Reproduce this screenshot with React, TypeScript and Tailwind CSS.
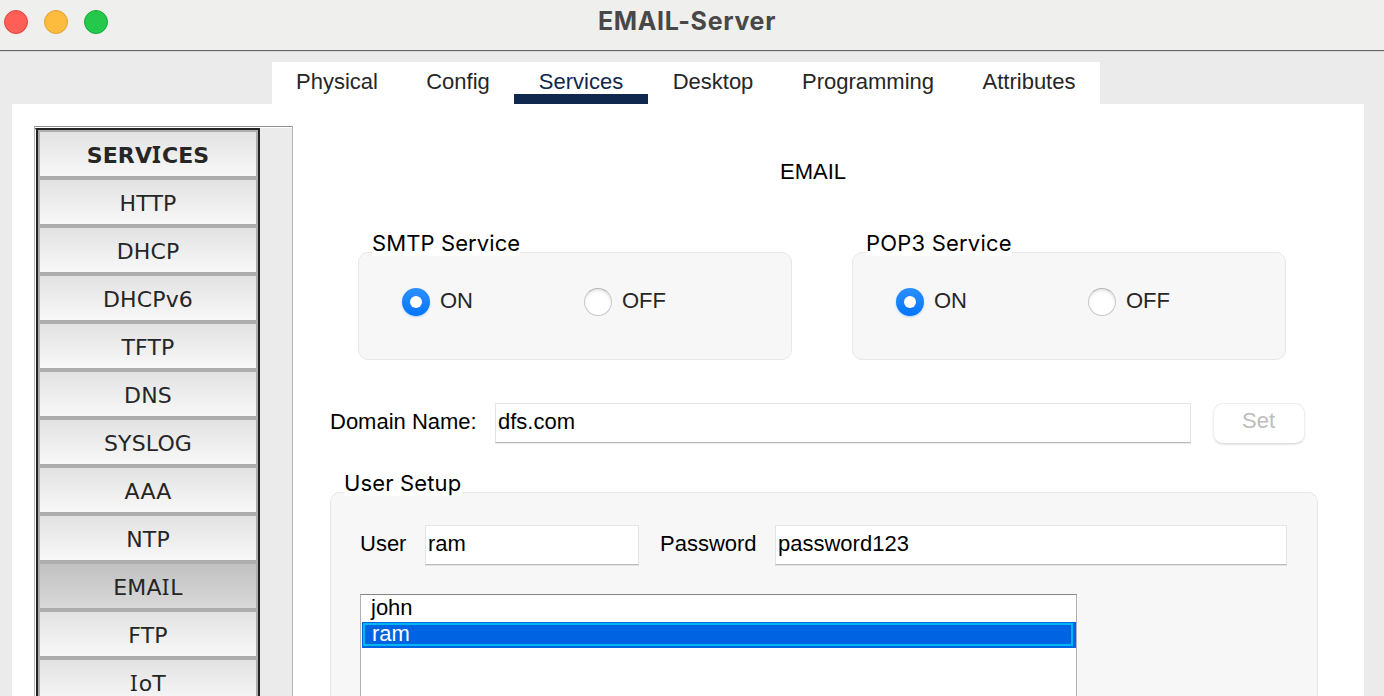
import { Fragment } from "react";
import { clsx } from "clsx";

const tabs = [
  { name: "Physical", width: "w-[130px]" },
  { name: "Config", width: "w-[112px]" },
  { name: "Services", width: "w-[134px]" },
  { name: "Desktop", width: "w-[130px]" },
  { name: "Programming", width: "w-[180px]" },
  { name: "Attributes", width: "w-[142px]" },
];

const services = ["SERVICES", "HTTP", "DHCP", "DHCPv6", "TFTP", "DNS", "SYSLOG", "AAA", "NTP", "EMAIL", "FTP", "IoT"];

function Caption({ text }: { text: string }) {
  const parts = text.split("I");
  return (
    <span>
      {parts.map((p, i) => (
        <Fragment key={i}>
          {i > 0 && <span className="font-['Noto_Sans',sans-serif] text-[22.5px] leading-none tracking-[1px]">I</span>}
          {p}
        </Fragment>
      ))}
    </span>
  );
}

function Radio({ checked, label }: { checked?: boolean; label: string }) {
  return (
    <label className="flex h-7 items-center gap-[10px] text-[#262626]">
      <span
        className={clsx(
          "flex size-7 shrink-0 items-center justify-center rounded-full",
          checked
            ? "bg-linear-to-b from-[#2a8fff] to-[#0075ff] shadow-[0_1px_2px_rgba(0,110,255,0.3)]"
            : "border border-[#c9c9c9] border-t-[#b4b4b4] bg-white shadow-[inset_0_2px_3px_rgba(0,0,0,0.1)]",
        )}
      >
        {checked && <span className="size-3 rounded-full bg-white" />}
      </span>
      <span className="-mt-[3px] leading-6">{label}</span>
    </label>
  );
}

function Legend({ text, className }: { text: string; className: string }) {
  return (
    <div
      className={clsx(
        "absolute -top-[22px] h-[25px] whitespace-nowrap bg-white font-[Inter,sans-serif] text-[22px] leading-[25px]",
        className,
      )}
    >
      {text}
    </div>
  );
}

function Field({ value, className }: { value: string; className: string }) {
  return (
    <div
      className={clsx(
        "h-10 shrink-0 border border-[#e4e4e4] border-b-[#b9b9b9] bg-white pl-[2px] leading-[35px] shadow-[0_1px_0_rgba(0,0,0,0.08)]",
        className,
      )}
    >
      {value}
    </div>
  );
}

export default function App() {
  return (
    <div className="flex h-[696px] w-[1384px] flex-col overflow-hidden bg-[#ebebeb] font-['Liberation_Sans',Arial,sans-serif] text-[22px] text-black">
      <header className="relative flex h-[51px] shrink-0 items-center border-b border-[#656565] bg-[#efefed] pb-[7px] shadow-[0_1px_0_#dcdcdc]">
        <div className="ml-1 flex gap-4">
          <span className="size-6 rounded-full border border-[#e2463f] bg-[#ff5f57]" />
          <span className="size-6 rounded-full border border-[#e0a032] bg-[#febc3f]" />
          <span className="size-6 rounded-full border border-[#18a935] bg-[#24c94c]" />
        </div>
        <h1 className="-mt-[2px] ml-[490px] w-[180px] whitespace-nowrap font-[Inter,sans-serif] text-[25px] font-bold leading-8 tracking-[0.65px] text-[#484848]">
          EMAIL-Server
        </h1>
      </header>

      <nav className="ml-[272px] mt-[11px] flex h-[42px] w-[828px] shrink-0 bg-white">
        {tabs.map((t) => (
          <div
            key={t.name}
            className={clsx(
              "flex h-full justify-center border-b-[10px] pt-2 leading-6",
              t.width,
              t.name === "Services" ? "border-[#10284d] text-[#10284d]" : "border-transparent text-[#262626]",
            )}
          >
            {t.name}
          </div>
        ))}
      </nav>

      <main className="ml-3 flex h-[592px] w-[1352px] bg-white pl-[22px] pt-[22px]">
        <aside className="h-[600px] w-[259px] shrink-0 border border-[#b3b3b3] border-t-[#8e8e8e] pt-px">
          <div className="flex h-full bg-[#ebebeb]">
            <div className="ml-0 h-full w-[225px] border-l border-r-2 border-t-2 border-l-white border-r-[#232325] border-t-[#232325]">
              <div className="flex h-full flex-col gap-1 border-l-2 border-l-[#232325] bg-[#adadad] pl-[2px] pr-[2px] pt-[2px]">
                {services.map((s) => (
                  <div
                    key={s}
                    className={clsx(
                      "flex h-11 shrink-0 items-center justify-center bg-linear-to-b pt-1 font-['DejaVu_Sans',Verdana,sans-serif] leading-6 tracking-[0.15px] text-[#262626]",
                      s === "EMAIL" ? "from-[#c1c1c1] to-[#d9d9d9]" : "from-[#e2e2e2] to-[#f8f8f8]",
                      s === "SERVICES" && "font-bold",
                    )}
                  >
                    <Caption text={s} />
                  </div>
                ))}
              </div>
            </div>
          </div>
        </aside>

        <section className="ml-[37px] flex w-[988px] shrink-0 flex-col">
          <h2 className="mt-[34px] pl-[450px] leading-6">EMAIL</h2>

          <div className="ml-7 mt-[68px] flex gap-[60px]">
            <div className="relative h-[108px] w-[434px] rounded-[10px] border border-[#e8e8e8] bg-[#f7f7f7]">
              <Legend text="SMTP Service" className="left-[13px] w-[148px] tracking-[0.1px]" />
              <div className="ml-[43px] mt-[35px] flex">
                <div className="w-[182px]">
                  <Radio checked label="ON" />
                </div>
                <Radio label="OFF" />
              </div>
            </div>
            <div className="relative h-[108px] w-[434px] rounded-[10px] border border-[#e8e8e8] bg-[#f7f7f7]">
              <Legend text="POP3 Service" className="left-[13px] w-[146px] tracking-[0.2px]" />
              <div className="ml-[43px] mt-[35px] flex">
                <div className="w-[192px]">
                  <Radio checked label="ON" />
                </div>
                <Radio label="OFF" />
              </div>
            </div>
          </div>

          <div className="mt-[43px] flex h-[41px]">
            <span className="w-[165px] leading-[37px]">Domain Name:</span>
            <Field value="dfs.com" className="w-[696px]" />
            <button className="ml-[22px] h-[41px] w-[92px] rounded-[10px] border border-[#eeeeee] border-b-[#dedede] bg-white pb-[7px] pr-px text-[#bdbdbd] shadow-[0_1px_2px_rgba(0,0,0,0.1)]">
              Set
            </button>
          </div>

          <div className="relative mt-12 h-[240px] shrink-0 rounded-t-[10px] border border-b-0 border-[#e8e8e8] bg-[#f7f7f7] pl-[29px]">
            <Legend text="User Setup" className="left-[13px] w-[118px] tracking-[0.15px]" />
            <div className="mt-8 flex">
              <span className="w-[65px] leading-[37px]">User</span>
              <Field value="ram" className="w-[214px]" />
              <span className="ml-[21px] w-[115px] leading-[37px]">Password</span>
              <Field value="password123" className="w-[512px]" />
            </div>
            <div className="mt-[29px] h-[160px] w-[717px] border border-[#b0b0b0] border-t-[#858585] bg-white pl-px pt-px">
              <div className="h-[26px] pl-[9px] leading-[24px]">john</div>
              <div className="h-[26px] bg-[#0063e1] pb-[2px] pl-px pr-[3px] pt-px text-white">
                <div className="h-[23px] border-2 border-[#00b7f4] pl-[7px] leading-[17px]">ram</div>
              </div>
            </div>
          </div>
        </section>
      </main>
    </div>
  );
}
